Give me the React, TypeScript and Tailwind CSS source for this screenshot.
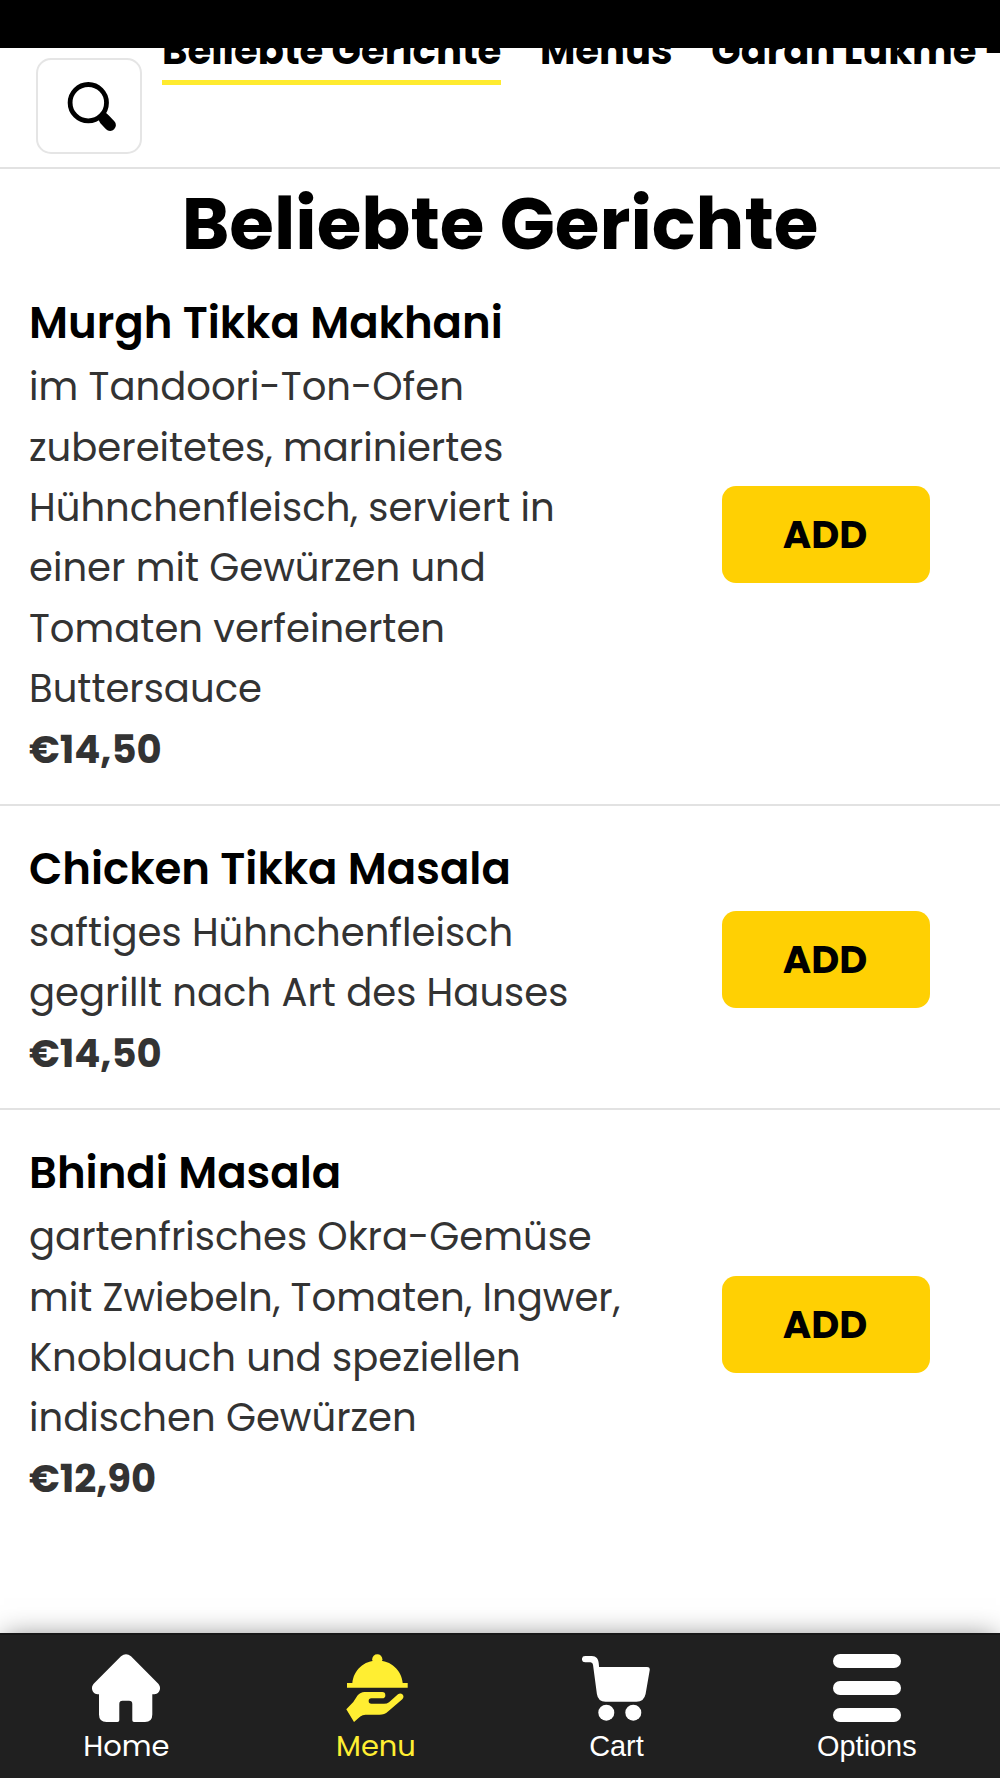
import React from 'react';

interface Dish {
  name: string;
  lines: string[];
  price: string;
}

const categories = ['Beliebte Gerichte', 'Menüs', 'Garan Lukme - Vorspeisen'];

const dishes: Dish[] = [
  {
    name: 'Murgh Tikka Makhani',
    lines: [
      'im Tandoori-Ton-Ofen',
      'zubereitetes, mariniertes',
      'Hühnchenfleisch, serviert in',
      'einer mit Gewürzen und',
      'Tomaten verfeinerten',
      'Buttersauce',
    ],
    price: '€14,50',
  },
  {
    name: 'Chicken Tikka Masala',
    lines: ['saftiges Hühnchenfleisch', 'gegrillt nach Art des Hauses'],
    price: '€14,50',
  },
  {
    name: 'Bhindi Masala',
    lines: [
      'gartenfrisches Okra-Gemüse',
      'mit Zwiebeln, Tomaten, Ingwer,',
      'Knoblauch und speziellen',
      'indischen Gewürzen',
    ],
    price: '€12,90',
  },
];

function SearchIcon() {
  return (
    <svg width="50" height="50" viewBox="0 0 50 50" fill="none" stroke="black">
      <circle cx="21.3" cy="21.7" r="18.2" strokeWidth="4.8" />
      <path d="M34 32.5L38 37" strokeWidth="8.5" />
      <path d="M37.5 38.2L43.2 44.2" strokeWidth="11.4" strokeLinecap="round" />
    </svg>
  );
}

function HomeIcon() {
  return (
    <svg width="68" height="68" viewBox="0 0 68 68" fill="currentColor">
      <path d="M29 2.2Q34-1.6 39 2.2L66.3 29.8C70 34 67.3 40.3 62.5 40.3H60.3V60.5Q60.3 68 53 68H42Q40.3 68 40.3 66.3V50Q40.3 46.7 37 46.7H30.5Q27.3 46.7 27.3 50V66.3Q27.3 68 25.5 68H14.5Q7 68 7 60.5V40.3H5.5C.7 40.3-2 34 1.7 29.8Z" />
    </svg>
  );
}

function MenuIcon() {
  return (
    <svg width="68" height="68" viewBox="0 0 68 68" fill="currentColor">
      <circle cx="35.3" cy="5.3" r="5.1" />
      <path d="M10.3 29.5C11.5 16 22 6.5 35.5 6.5S59.5 16 60.7 29H65.7V33.8H5V29H10.3Z" />
      <path d="M4.3 55.3L11.3 48L15.5 41.5Q18.5 38 22.5 38H40.2A3.15 3.15 0 0 1 40.2 44.3H29.4A2.7 2.7 0 0 0 29.4 49.8H42Q45 49.8 47 48.2L56 40.3C59.5 37.6 63.6 42 60.3 45.3L46 57.5Q42.5 60.8 37.5 60.8H23.5Q20.5 60.8 18.3 62.4L12 68Z" />
    </svg>
  );
}

function CartIcon() {
  return (
    <svg width="68" height="68" viewBox="0 0 68 68" fill="currentColor">
      <path d="M3.1 2H9.8C14.3 2 16.4 5 16.7 9L17.1 13H65Q68.2 13 67.7 16.3L63.6 40Q62 47.7 54.5 47.7H23.5Q16 47.7 14.9 40L11 10.8Q10.7 8.3 8.5 8.3H3.1A3.15 3.15 0 0 1 3.1 2Z" />
      <circle cx="24.3" cy="58.7" r="8" />
      <circle cx="51.3" cy="58.7" r="8" />
    </svg>
  );
}

function OptionsIcon() {
  return (
    <svg width="68" height="68" viewBox="0 0 68 68" fill="currentColor">
      <rect y="0" width="68" height="14" rx="7" />
      <rect y="27" width="68" height="14" rx="7" />
      <rect y="54" width="68" height="14" rx="7" />
    </svg>
  );
}

function DishRow({ dish }: { dish: Dish }) {
  return (
    <article className="flex items-center justify-between border-b-2 border-[#e2e2e2] pt-[33px] pr-[70px] pb-[23.8px] pl-[29px] last:border-b-0">
      <div className="whitespace-nowrap text-[38.6px] leading-[60.36px] text-[#333333]">
        <h2 className="mb-[4px] text-[43.4px] font-semibold text-black">{dish.name}</h2>
        {dish.lines.map((line) => (
          <p key={line}>{line}</p>
        ))}
        <p className="font-bold">{dish.price}</p>
      </div>
      <button className="mb-[3px] h-[97px] w-[208px] rounded-[14px] bg-[#ffd003] pr-[2px] text-[38.6px] font-bold text-black">
        ADD
      </button>
    </article>
  );
}

const navItems = [
  { label: 'Home', icon: <HomeIcon />, style: 'text-white' },
  { label: 'Menu', icon: <MenuIcon />, style: 'text-[#ffee32]' },
  { label: 'Cart', icon: <CartIcon />, style: "text-white font-['Liberation_Sans',sans-serif]" },
  { label: 'Options', icon: <OptionsIcon />, style: "text-white font-['Liberation_Sans',sans-serif]" },
];

export default function App() {
  return (
    <div className="flex h-[1778px] w-[1000px] flex-col overflow-hidden bg-white font-['Poppins',Inter,sans-serif] text-black">
      {/* Status bar */}
      <div className="h-[48px] shrink-0 bg-black" />

      <header className="flex h-[121px] shrink-0 items-start overflow-hidden border-b-2 border-[#e2e2e2] pl-[36px]">
        <button className="mt-[10px] flex h-[96px] w-[106px] shrink-0 items-center justify-center rounded-[15px] border-2 border-[#e5e5e5] pl-[5px]">
          <SearchIcon />
        </button>
        {/* Category strip is scrolled partly under the status bar */}
        <nav className="-mt-[26px] ml-[20px] flex gap-[38.6px] whitespace-nowrap text-[38.6px] leading-[58px] font-bold">
          {categories.map((category, i) => (
            <a key={category} className={i === 0 ? 'border-b-5 border-[#ffeb2f]' : ''}>
              {category}
            </a>
          ))}
        </nav>
      </header>

      <main className="min-h-0 flex-1">
        <h1 className="mt-[17px] -mb-[2px] text-center text-[72.4px] leading-[76px] font-bold">Beliebte Gerichte</h1>
        {dishes.map((dish) => (
          <DishRow key={dish.name} dish={dish} />
        ))}
      </main>

      <nav className="flex h-[145px] shrink-0 justify-around border-t-2 border-[#171717] bg-[#202020] pt-[18.5px] shadow-[0_0_26px_-4px_rgba(0,0,0,0.5)]">
        {navItems.map((item) => (
          <div key={item.label} className={`flex flex-col items-center gap-[6px] text-[28.9px] leading-[36px] ${item.style}`}>
            {item.icon}
            <span>{item.label}</span>
          </div>
        ))}
      </nav>
    </div>
  );
}
